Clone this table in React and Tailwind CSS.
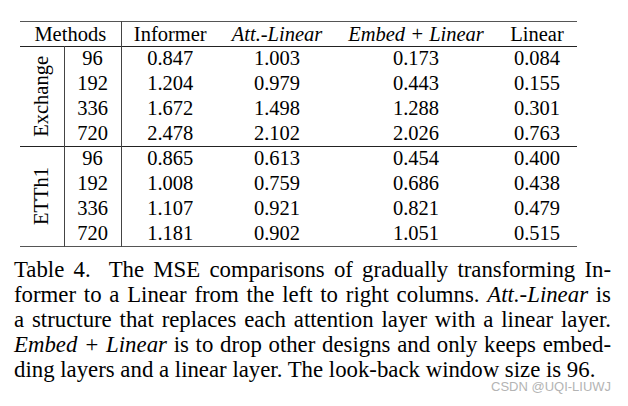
import React from "react";

const groups = [
  {
    name: "Exchange",
    rows: [
      ["96", "0.847", "1.003", "0.173", "0.084"],
      ["192", "1.204", "0.979", "0.443", "0.155"],
      ["336", "1.672", "1.498", "1.288", "0.301"],
      ["720", "2.478", "2.102", "2.026", "0.763"],
    ],
  },
  {
    name: "ETTh1",
    rows: [
      ["96", "0.865", "0.613", "0.454", "0.400"],
      ["192", "1.008", "0.759", "0.686", "0.438"],
      ["336", "1.107", "0.921", "0.821", "0.479"],
      ["720", "1.181", "0.902", "1.051", "0.515"],
    ],
  },
];

export default function App() {
  return (
    <div className="relative w-[628px] h-[406px] bg-white text-black font-[Liberation_Serif]">
      <div className="pt-[21px] pl-[20px]">
        <table className="border-collapse table-fixed w-[557px] text-[20.5px] leading-none font-[Liberation_Serif]">
          <colgroup>
            <col className="w-[44px]" />
            <col className="w-[57px]" />
            <col className="w-[98px]" />
            <col className="w-[116px]" />
            <col className="w-[162px]" />
            <col className="w-[80px]" />
          </colgroup>
          <thead>
            <tr className="h-[25px] border-t-[1.5px] border-t-[#555] border-b border-b-[#222]">
              <th colSpan={2} className="font-normal text-center border-r border-r-[#444] p-0">Methods</th>
              <th className="font-normal text-center p-0">Informer</th>
              <th className="font-normal italic text-center p-0">Att.-Linear</th>
              <th className="font-normal italic text-center p-0">Embed + Linear</th>
              <th className="font-normal text-center p-0">Linear</th>
            </tr>
          </thead>
          {groups.map((g, gi) => (
            <tbody key={g.name} className={gi === 1 ? "border-t border-t-[#222] border-b-[1.5px] border-b-[#555]" : ""}>
              {g.rows.map((r, ri) => (
                <tr key={r[0]} className="h-[25px]">
                  {ri === 0 && (
                    <td rowSpan={4} className="p-0 border-r border-r-[#444] align-middle">
                      <div className="flex justify-center">
                        <span className="[writing-mode:vertical-rl] rotate-180 pl-[1px]">{g.name}</span>
                      </div>
                    </td>
                  )}
                  <td className="p-0 text-center border-r border-r-[#444] pb-[2px]">{r[0]}</td>
                  {r.slice(1).map((v, i) => (
                    <td key={i} className="p-0 text-center pb-[2px]">{v}</td>
                  ))}
                </tr>
              ))}
            </tbody>
          ))}
        </table>
      </div>

      <div className="mt-[10px] pl-[14px] w-[611px] text-[22.8px] leading-[25px] font-[Liberation_Serif]">
        <div className="text-justify [text-align-last:justify]">
          Table 4.&nbsp; The MSE comparisons of gradually transforming In-
        </div>
        <div className="text-justify [text-align-last:justify]">
          former to a Linear from the left to right columns. <i>Att.-Linear</i> is
        </div>
        <div className="text-justify [text-align-last:justify]">
          a structure that replaces each attention layer with a linear layer.
        </div>
        <div className="text-justify [text-align-last:justify]">
          <i>Embed + Linear</i> is to drop other designs and only keeps embed-
        </div>
        <div>ding layers and a linear layer. The look-back window size is 96.</div>
      </div>

      <span className="absolute left-[491px] top-[380px] text-[13px] leading-none text-[#b4b4b4] font-[Liberation_Sans]">
        CSDN @UQI-LIUWJ
      </span>
    </div>
  );
}
